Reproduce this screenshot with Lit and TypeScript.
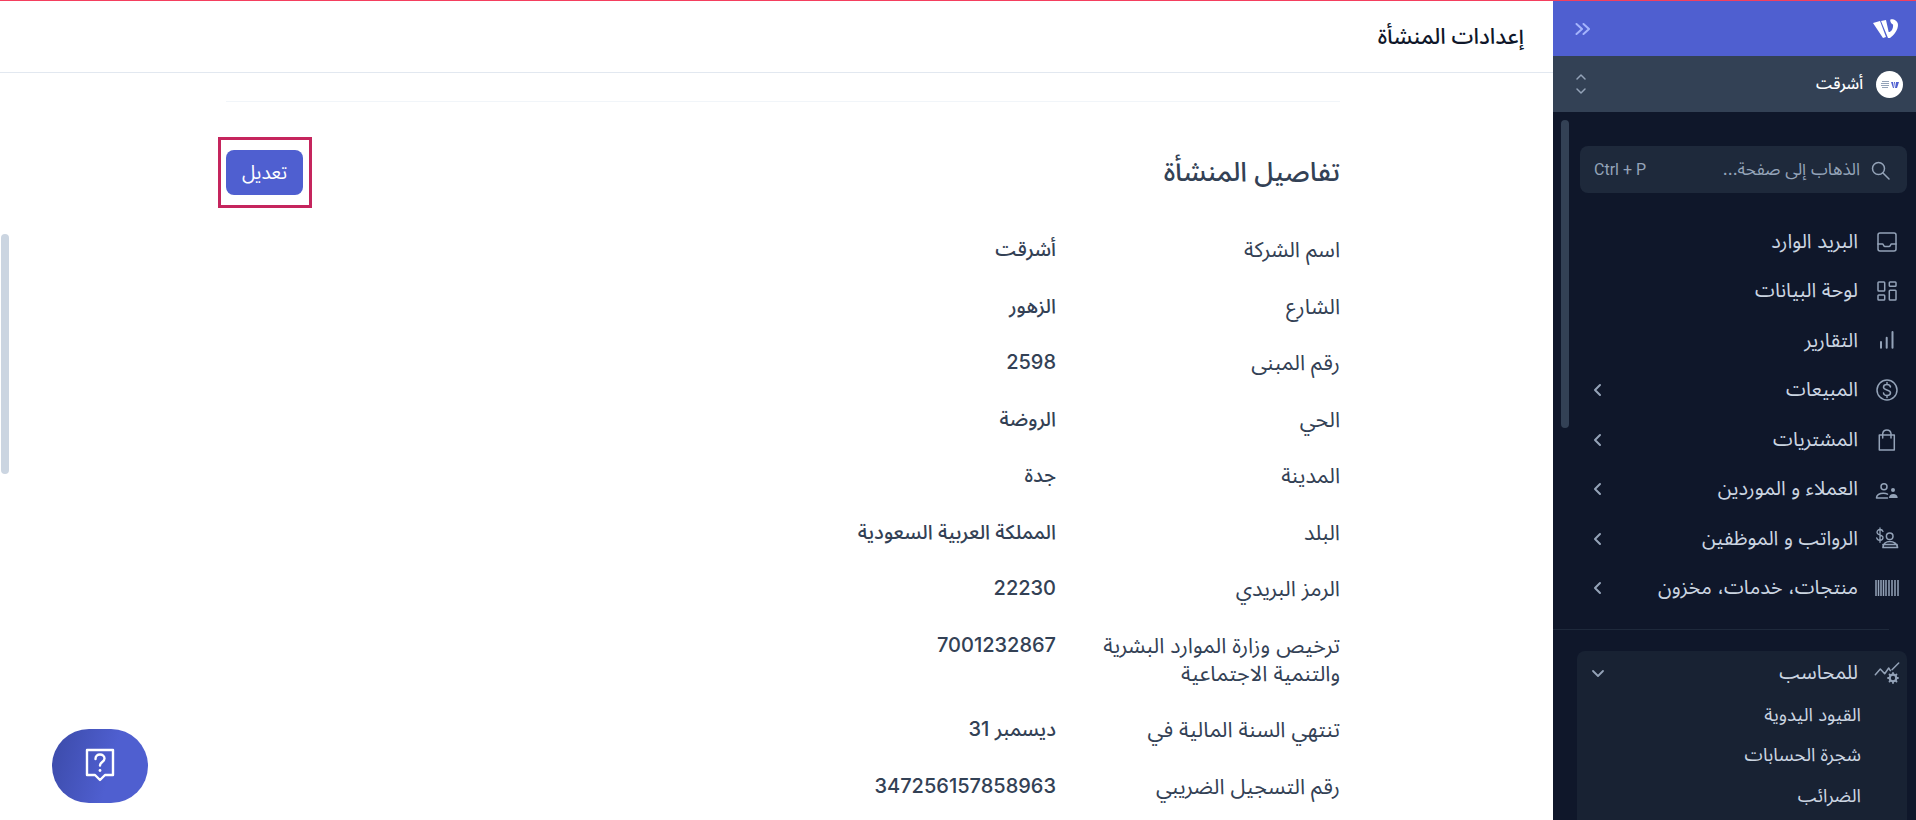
import { LitElement, html, css, svg } from 'lit';
import { customElement } from 'lit/decorators.js';

const icons: Record<string, unknown> = {
  inbox: svg`<rect x="3" y="3" width="18" height="18" rx="2"/><path d="M3 14h4.500c1 0 1 2.500 2.500 2.500h4c1.500 0 1.500-2.500 2.500-2.500H21"/>`,
  dash: svg`<rect x="3" y="3" width="6.700" height="9" rx=".8"/><rect x="14.300" y="3" width="6.700" height="4.300" rx=".8"/><rect x="3" y="16" width="6.700" height="5" rx=".8"/><rect x="14.300" y="11.300" width="6.700" height="9.700" rx=".8"/>`,
  bars: svg`<path d="M6 18.700V13M11.700 18.700V8.700M17.500 18.700V3" stroke-width="2"/>`,
  dollar: svg`<circle cx="12" cy="12" r="10"/><path d="M15.500 9c-.3-1.500-1.800-2.500-3.500-2.500-2 0-3.500 1.100-3.500 2.700 0 3.500 7 2 7 5.600 0 1.600-1.500 2.700-3.500 2.700-1.800 0-3.300-1-3.500-2.500M12 4.500v2M12 17.500v2"/>`,
  bag: svg`<path d="M4.300 7h15v15h-15zM7.700 10V5.500a4.200 4.200 0 0 1 8.300 0V10"/>`,
  users: svg`<circle cx="9" cy="9.700" r="3"/><path d="M1.500 20.500c.5-2.800 3.500-4.200 7-4.200 1.500 0 3 .3 4 .8M1.500 21h11"/><circle cx="18" cy="13" r="2" fill="currentColor" stroke="none"/><path d="M14 21c0-2.800 1.800-4 4.300-4s4.400 1.200 4.400 4z" fill="currentColor" stroke="none"/>`,
  payroll: svg`<circle cx="14.700" cy="9.300" r="3.300"/><path d="M8 20.500c0-3.800 3-6 6.800-6s7.700 2.200 7.700 6zM8 17.500h14" stroke-width="1.700"/><path d="M5 1v14.300M8 4.500C7.500 3 6.500 2.500 5 2.500S2 3.500 2 5.300c0 3.500 6 2 6 5.200 0 1.800-1.300 2.800-3 2.800s-3-1-3.300-2.500" stroke-width="1.300"/>`,
  barcode: svg`<path d="M1 4v16M3.500 4v16M6 4v16M8.500 4v16M11 4v16M14 4v16M17 4v16M20 4v16M23 4v16" stroke-width="1.500" stroke-linecap="butt"/>`,
  acct: svg`<path d="M.3 13.700L5.300 8l4.400 4.700 4-5.700 1.600 2.700M17 8.700L23.700 2"/><circle cx="18" cy="17" r="3.300" stroke-width="2.200"/><path d="M18 12v1.500M18 20.500V22M13 17h1.500M21.500 17H23M14.500 13.500l1 1M20.500 19.500l1 1M21.500 13.500l-1 1M15.500 19.500l-1 1" stroke-width="1.800"/>`,
};

const menu = [
  { label: 'البريد الوارد', icon: 'inbox' },
  { label: 'لوحة البيانات', icon: 'dash' },
  { label: 'التقارير', icon: 'bars' },
  { label: 'المبيعات', icon: 'dollar', arrow: true },
  { label: 'المشتريات', icon: 'bag', arrow: true },
  { label: 'العملاء و الموردين', icon: 'users', arrow: true },
  { label: 'الرواتب و الموظفين', icon: 'payroll', arrow: true },
  { label: 'منتجات، خدمات، مخزون', icon: 'barcode', arrow: true },
];

const details = [
  ['اسم الشركة', 'أشرقت'],
  ['الشارع', 'الزهور'],
  ['رقم المبنى', '2598'],
  ['الحي', 'الروضة'],
  ['المدينة', 'جدة'],
  ['البلد', 'المملكة العربية السعودية'],
  ['الرمز البريدي', '22230'],
  ['ترخيص وزارة الموارد البشرية والتنمية الاجتماعية', '7001232867'],
  ['تنتهي السنة المالية في', 'ديسمبر 31'],
  ['رقم التسجيل الضريبي', '347256157858963'],
];

@customElement('app-root')
export class AppRoot extends LitElement {
  static styles = css`
    :host {
      display: block;
      height: 820px;
      overflow: hidden;
      background: #fff;
      font-family: Inter, 'Noto Sans Arabic', 'DejaVu Sans', sans-serif;
      color: #334155;
    }
    .page {
      direction: rtl;
      display: grid;
      grid-template-columns: 363px 1fr;
      height: 819px;
      border-top: 1px solid #f43f5e;
    }

    /* sidebar */
    .side {
      background: #0f172a;
      height: 819px;
      overflow: hidden;
      display: flex;
      flex-direction: column;
    }
    .brand {
      height: 55px;
      flex: none;
      background: #4f5fd0;
      display: flex;
      align-items: center;
      justify-content: space-between;
      padding: 0 18px 0 22px;
    }
    .org {
      height: 56px;
      flex: none;
      background: #334155;
      display: flex;
      align-items: center;
      justify-content: space-between;
      padding: 0 13px 0 22px;
      color: #fff;
      font-size: 15.500px;
      font-weight: 500;
    }
    .org-name { display: flex; align-items: center; gap: 13px; }
    .org-logo {
      width: 27px;
      height: 27px;
      border-radius: 50%;
      background: #fff;
      display: flex;
      align-items: center;
      justify-content: center;
    }
    .side-body { position: relative; flex: 1; padding: 34px 9px 0 9px; }
    .side-scroll {
      position: absolute;
      left: 8px;
      top: 8px;
      width: 8px;
      height: 308px;
      border-radius: 4px;
      background: #334155;
    }
    .search {
      height: 47px;
      margin-left: 18px;
      border-radius: 8px;
      background: #1e293b;
      display: flex;
      align-items: center;
      justify-content: space-between;
      padding: 0 17px 0 14px;
      color: #94a3b8;
      font-size: 17px;
    }
    .search span { display: flex; align-items: center; gap: 10px; }
    .kbd { direction: ltr; font-size: 16px; font-family: Roboto, sans-serif; }
    .menu { margin-top: 24px; }
    .item {
      height: 49.500px;
      display: flex;
      align-items: center;
      gap: 17px;
      padding: 0 8px 0 28px;
      color: #cbd5e1;
      font-size: 20px;
    }
    .item svg.ic { width: 24px; height: 24px; flex: none; color: #94a3b8; overflow: visible; }
    .chev { margin-right: auto; width: 16px; height: 16px; color: #94a3b8; flex: none; }
    svg { fill: none; stroke: currentColor; stroke-width: 1.500; stroke-linecap: round; stroke-linejoin: round; }
    .rule { height: 1px; background: #1e293b; margin: 16px 0 21px 0; margin-left: -9px; margin-right: 18px; }
    .group {
      width: 330px;
      height: 180px;
      border-radius: 8px;
      background: #1e293b99;
    }
    .group .item { height: 44px; padding-left: 13px; }
    .sub { padding-right: 46px; height: 40.500px; display: flex; align-items: center; color: #cbd5e1; font-size: 18.500px; }

    /* main */
    .main { position: relative; overflow: hidden; }
    .top {
      height: 71px;
      border-bottom: 1px solid #e2e8f0;
      display: flex;
      align-items: center;
      padding: 0 29px;
      font-size: 22px;
      font-weight: 500;
      color: #0f172a;
    }
    .wrap { width: 1114px; margin-right: 213px; }
    .wrap-rule { height: 1px; background: #f1f5f9; margin-top: 28px; }
    .head {
      display: flex;
      justify-content: space-between;
      align-items: center;
      margin-top: 35px;
    }
    h2 { margin: 0; font-size: 27px; font-weight: 500; color: #334155; }
    .edit-box { border: 3px solid #c5255d; padding: 10px 6px 10px 5px; margin-left: -8px; }
    .edit {
      display: block;
      width: 77px;
      height: 45px;
      border: 0;
      border-radius: 8px;
      background: #4f5fd0;
      color: #fff;
      font: 400 19px Inter, 'Noto Sans Arabic', 'DejaVu Sans', sans-serif;
    }
    .rows { margin-top: 27px; display: flex; flex-direction: column; gap: 28.500px; }
    .row {
      display: grid;
      grid-template-columns: 284px 1fr;
      font-size: 20px;
      line-height: 28px;
    }
    .row .label { padding-left: 30px; font-size: 21.500px; }
    .row .val { font-weight: 500; }
    .main-scroll {
      position: absolute;
      left: 1px;
      top: 233px;
      width: 8px;
      height: 240px;
      border-radius: 4px;
      background: #cbd5e1;
    }
    .fab {
      position: absolute;
      left: 52px;
      top: 728px;
      width: 96px;
      height: 74px;
      border-radius: 37px;
      background: linear-gradient(105deg, #3b4aa8 0%, #4f5fd0 60%);
      display: flex;
      align-items: center;
      justify-content: center;
      color: #fff;
    }
  `;

  render() {
    return html`
      <div class="page">
        <aside class="side">
          <div class="brand">
            <svg width="25" height="19" viewBox="0 0 25 19" style="stroke:none;fill:#fff"><path d="M0 4L7 2l6 16-3 1zM8 2l5-1 4 18h-2zM17.500.5C20-.2 25 1.500 25 6c0 5-4 10-8 13l-1.500-6c2.500 0 5-3 4.500-7.500-1.500 0-3.500-3.500-2.500-5z"/></svg>
            <svg width="16" height="12" viewBox="0 0 16 12" style="color:#a5b4fc"><path d="M8.500 1l5.500 5-5.500 5M1.500 1L7 6l-5.500 5" stroke-width="2"/></svg>
          </div>
          <div class="org">
            <span class="org-name">
              <span class="org-logo">
                <svg width="18" height="7" viewBox="0 0 18 7" style="stroke:none"><path d="M0 2h8v1H0zM1 0h7v1H1zM0 4h8v1H0zM1 6h6v1H1z" fill="#94a3b8"/><path d="M10 1h2l1 6h-1zM13 1h1l1 6h-1zM15 1h3l-2 6h-1z" fill="#4f5fd0"/></svg>
              </span>
              أشرقت
            </span>
            <svg width="12" height="24" viewBox="0 0 12 24" style="color:#94a3b8"><path d="M2 7l4-4 4 4M2 17l4 4 4-4" stroke-width="1.500"/></svg>
          </div>
          <div class="side-body">
            <div class="side-scroll"></div>
            <div class="search">
              <span>
                <svg width="20" height="20" viewBox="0 0 20 20"><circle cx="8.500" cy="8.500" r="6"/><path d="M13 13l6 6"/></svg>
                الذهاب إلى صفحة...
              </span>
              <span class="kbd">Ctrl + P</span>
            </div>
            <div class="menu">
              ${menu.map(m => html`
                <div class="item">
                  <svg class="ic" viewBox="0 0 24 24">${icons[m.icon]}</svg>
                  ${m.label}
                  ${m.arrow ? html`<svg class="chev" viewBox="0 0 16 16"><path d="M10 3L5 8l5 5" stroke-width="2"/></svg>` : ''}
                </div>`)}
            </div>
            <div class="rule"></div>
            <div class="group">
              <div class="item">
                <svg class="ic" viewBox="0 0 24 24">${icons.acct}</svg>
                للمحاسب
                <svg class="chev" viewBox="0 0 16 16"><path d="M3 6l5 5 5-5" stroke-width="1.800"/></svg>
              </div>
              <div class="sub">القيود اليدوية</div>
              <div class="sub">شجرة الحسابات</div>
              <div class="sub">الضرائب</div>
            </div>
          </div>
        </aside>
        <main class="main">
          <div class="top">إعدادات المنشأة</div>
          <div class="wrap">
            <div class="wrap-rule"></div>
            <div class="head">
              <h2>تفاصيل المنشأة</h2>
              <div class="edit-box"><button class="edit">تعديل</button></div>
            </div>
            <div class="rows">
              ${details.map(d => html`
                <div class="row">
                  <div class="label">${d[0]}</div>
                  <div class="val">${d[1]}</div>
                </div>`)}
            </div>
          </div>
          <div class="main-scroll"></div>
          <div class="fab">
            <svg width="30" height="36" viewBox="0 0 30 36"><path d="M2 2h26v25h-8l-5 5-5-5H2z" stroke-width="2.400"/><path d="M10.500 11c0-3 2-4.500 4.500-4.500s4.500 1.500 4.500 4c0 3.500-4.500 3.500-4.500 7" stroke-width="2.400"/><circle cx="15" cy="22.500" r="1.400" fill="#fff" stroke="none"/></svg>
          </div>
        </main>
      </div>
    `;
  }
}
